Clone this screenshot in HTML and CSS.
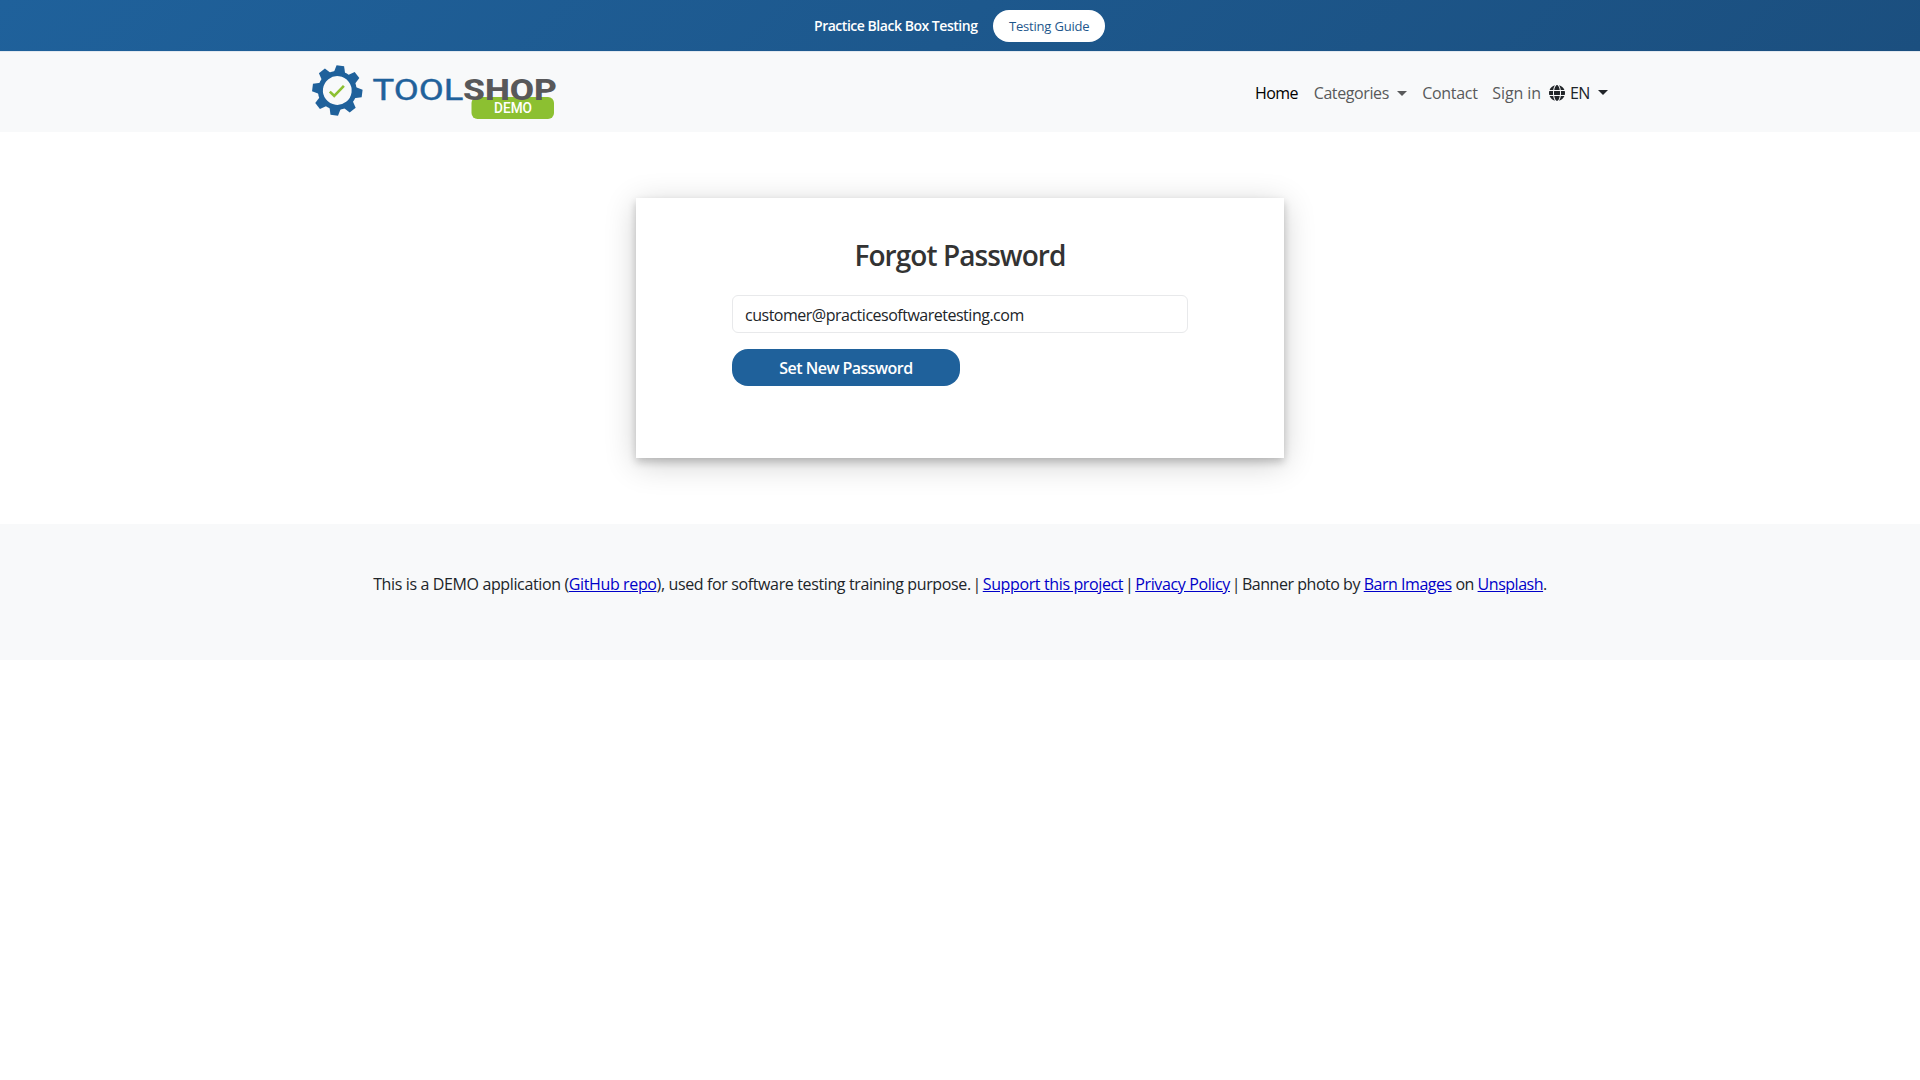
FILE: index.html
```html
<!DOCTYPE html>
<html lang="en">
<head>
<meta charset="utf-8">
<title>Forgot Password - Toolshop</title>
<link rel="stylesheet" href="styles.css">
</head>
<body>
<div class="banner">
  <span class="banner-title">Practice Black Box Testing</span>
  <a class="banner-link"><span class="guide">Testing Guide</span></a>
</div>
<header class="header">
  <nav class="nav">
    <svg class="logo" width="248" height="56" viewBox="0 0 248 56" aria-label="Toolshop demo">
      <g transform="translate(25.3 28.500) rotate(7)" fill="#1f619b">
        <circle r="16.9" fill="none" stroke="#1f619b" stroke-width="5"/>
        <g id="pair"><path id="tooth" d="M-5.7-17.5-3.8-25H3.8L5.7-17.5Z"/><use href="#tooth" transform="rotate(180)"/></g>
        <use href="#pair" transform="rotate(45)"/><use href="#pair" transform="rotate(90)"/><use href="#pair" transform="rotate(135)"/>
      </g>
      <path d="M17.8 29.6l4.4 4.2 9.7-10" fill="none" stroke="#8cc031" stroke-width="2.6"/>
      <rect x="159.500" y="35" width="82.5" height="22" rx="6" fill="#8cc031"/>
      <text class="logo-tool" x="60.5" y="38" textLength="91" lengthAdjust="spacingAndGlyphs">TOOL</text>
      <text class="logo-shop" x="151" y="38" textLength="94" lengthAdjust="spacingAndGlyphs">SHOP</text>
      <text class="logo-demo" x="182" y="50.8" textLength="38" lengthAdjust="spacingAndGlyphs">DEMO</text>
    </svg>
    <ul class="menu">
      <li class="item home">Home</li>
      <li class="item categories"><span>Categories</span><i class="caret"></i></li>
      <li class="item contact">Contact</li>
      <li class="item signin">Sign in</li>
      <li class="item language">
        <svg width="16" height="16" viewBox="0 0 512 512" fill="currentColor"><path d="M352 256c0 22.200-1.200 43.600-3.300 64H163.300c-2.200-20.400-3.300-41.800-3.300-64s1.200-43.600 3.300-64h185.400c2.200 20.400 3.300 41.800 3.300 64zm28.800-64h123.100c5.300 20.500 8.100 41.900 8.100 64s-2.800 43.500-8.100 64H380.800c2.100-20.600 3.200-42 3.200-64s-1.100-43.400-3.200-64zm112.600-32H376.700c-10-63.900-29.800-117.400-55.300-151.600 78.300 20.700 142 77.500 172 151.600zm-149.100 0H167.700c6.100-36.400 15.500-68.600 27-94.700 10.500-23.600 22.200-40.700 33.500-51.500C239.400 3.200 248.700 0 256 0s16.600 3.200 27.800 13.800c11.300 10.800 23 27.900 33.500 51.500 11.600 26 20.900 58.200 27 94.700zm-209 0H18.600c30-74.100 93.700-130.900 172-151.600-25.500 34.200-45.300 87.700-55.300 151.600zM8.100 192h123.100c-2.100 20.600-3.200 42-3.200 64s1.100 43.400 3.200 64H8.100C2.800 299.500 0 278.100 0 256s2.800-43.500 8.100-64zm186.600 254.600c-11.600-26-20.900-58.200-27-94.600h176.600c-6.100 36.400-15.500 68.600-27 94.600-10.500 23.600-22.200 40.700-33.500 51.500C272.600 508.800 263.300 512 256 512s-16.600-3.200-27.800-13.800c-11.300-10.800-23-27.900-33.500-51.600zM135.300 352c10 63.900 29.800 117.400 55.300 151.600-78.300-20.700-142-77.500-172-151.600h116.700zm358.100 0c-30 74.100-93.700 130.900-172 151.600 25.500-34.200 45.200-87.700 55.300-151.600h116.700z"/></svg>
        <span class="lang-code">EN</span><i class="caret"></i>
      </li>
    </ul>
  </nav>
</header>
<main class="main">
  <form class="card">
    <h1 class="title"><span>Forgot Password</span></h1>
    <input class="email" type="text" value="customer@practicesoftwaretesting.com">
    <button class="submit" type="button">Set New Password</button>
  </form>
</main>
<footer class="footer">
  <p class="credits">This is a DEMO application (<a href="#">GitHub repo</a>), used for software testing training purpose. <span class="bar">|</span> <a href="#">Support this project</a> <span class="bar">|</span> <a href="#">Privacy Policy</a> <span class="bar">|</span> <span class="photo">Banner photo by <a href="#">Barn Images</a> on <a href="#">Unsplash</a>.</span></p>
</footer>
</body>
</html>
```
FILE: styles.css
```css
* { box-sizing: border-box; }
body {
  margin: 0;
  background: #fff;
  color: #212529;
  font: 16px/24px "Segoe UI", "Open Sans", sans-serif;
  letter-spacing: -0.3px;
}
.banner {
  display: flex;
  justify-content: center;
  align-items: center;
  gap: 15px;
  height: 51px;
  padding-right: 1px;
  background: linear-gradient(135deg, #1f619b 0%, #1b4f7f 100%);
  font-size: 14px;
}
.banner-title {
  width: 164px;
  color: #fff;
  font-weight: 600;
  letter-spacing: -0.47px;
  white-space: nowrap;
}
.banner-link {
  width: 112px;
  height: 32px;
  padding-left: 16px;
  border-radius: 16px;
  background: #fff;
  color: #1e578c;
  font-size: 13px;
  line-height: 32px;
  font-weight: 500;
  letter-spacing: -0.2px;
  white-space: nowrap;
}
.header { height: 81px; border-top: 1px solid #e3e9f0; background: #f8f9fa; }
.nav {
  display: flex;
  justify-content: space-between;
  width: 1296px;
  height: 80px;
  margin: 0 auto;
  padding-top: 10px;
}
.logo { display: block; overflow: visible; }
.logo-tool, .logo-shop { font-family: Roboto, sans-serif; font-size: 29px; letter-spacing: 0; }
.logo-tool { fill: #1f619b; stroke: #1f619b; stroke-width: 0.4px; font-weight: 400; }
.logo-shop { fill: #58585a; font-weight: 800; }
.logo-demo { fill: #fff; font: 500 14px Roboto, sans-serif; letter-spacing: 0; }
.menu {
  display: flex;
  width: 353px;
  margin: 19px 0 0;
  padding: 0;
  list-style: none;
  color: #595a5b;
  white-space: nowrap;
}
.item { display: flex; height: 24px; }
.home { width: 59px; color: #000; letter-spacing: -0.6px; }
.categories { width: 109px; letter-spacing: -0.4px; }
.categories span { width: 83px; }
.contact { width: 70.5px; }
.signin { width: 57px; letter-spacing: -0.1px; }
.language { color: #212529; align-items: center; }
.lang-code { width: 28px; margin-left: 5px; letter-spacing: -0.6px; }
.caret {
  width: 0;
  height: 0;
  margin-top: 10px;
  border: 5px solid transparent;
  border-top-color: currentColor;
  border-bottom: 0;
}
.language .caret { margin-top: -2px; }
.main { padding: 66px 0; }
.card {
  display: flex;
  flex-direction: column;
  width: 648px;
  height: 260px;
  margin: 0 auto;
  padding: 40px 96px 0;
  background: #fff;
  box-shadow: 0 4px 8px rgba(0, 0, 0, 0.2), 0 6px 30px rgba(0, 0, 0, 0.19);
}
.title {
  margin: 0 0 22px;
  color: #333;
  font-size: 28px;
  line-height: 35px;
  font-weight: 600;
  letter-spacing: -0.95px;
  text-align: center;
}
.email {
  width: 456px;
  height: 38px;
  padding: 2px 12px 1px;
  border: 1px solid #e8e9eb;
  border-radius: 6px;
  background: #fff;
  color: #212529;
  font: inherit;
  letter-spacing: -0.49px;
}
.submit {
  width: 228px;
  height: 37.5px;
  margin-top: 15.5px;
  padding: 1px 0 0;
  border: 0;
  border-radius: 16px;
  background: #1f619b;
  color: #fff;
  font: inherit;
  font-weight: 600;
  letter-spacing: -0.53px;
}
.footer { height: 136px; padding-top: 48px; background: #f8f9fa; }
.credits { margin: 0; text-align: center; letter-spacing: -0.37px; white-space: nowrap; }
.credits a { color: #0000c8; text-decoration: underline; }
.bar { margin: 0 -2px; }
.photo { letter-spacing: -0.47px; }
```
